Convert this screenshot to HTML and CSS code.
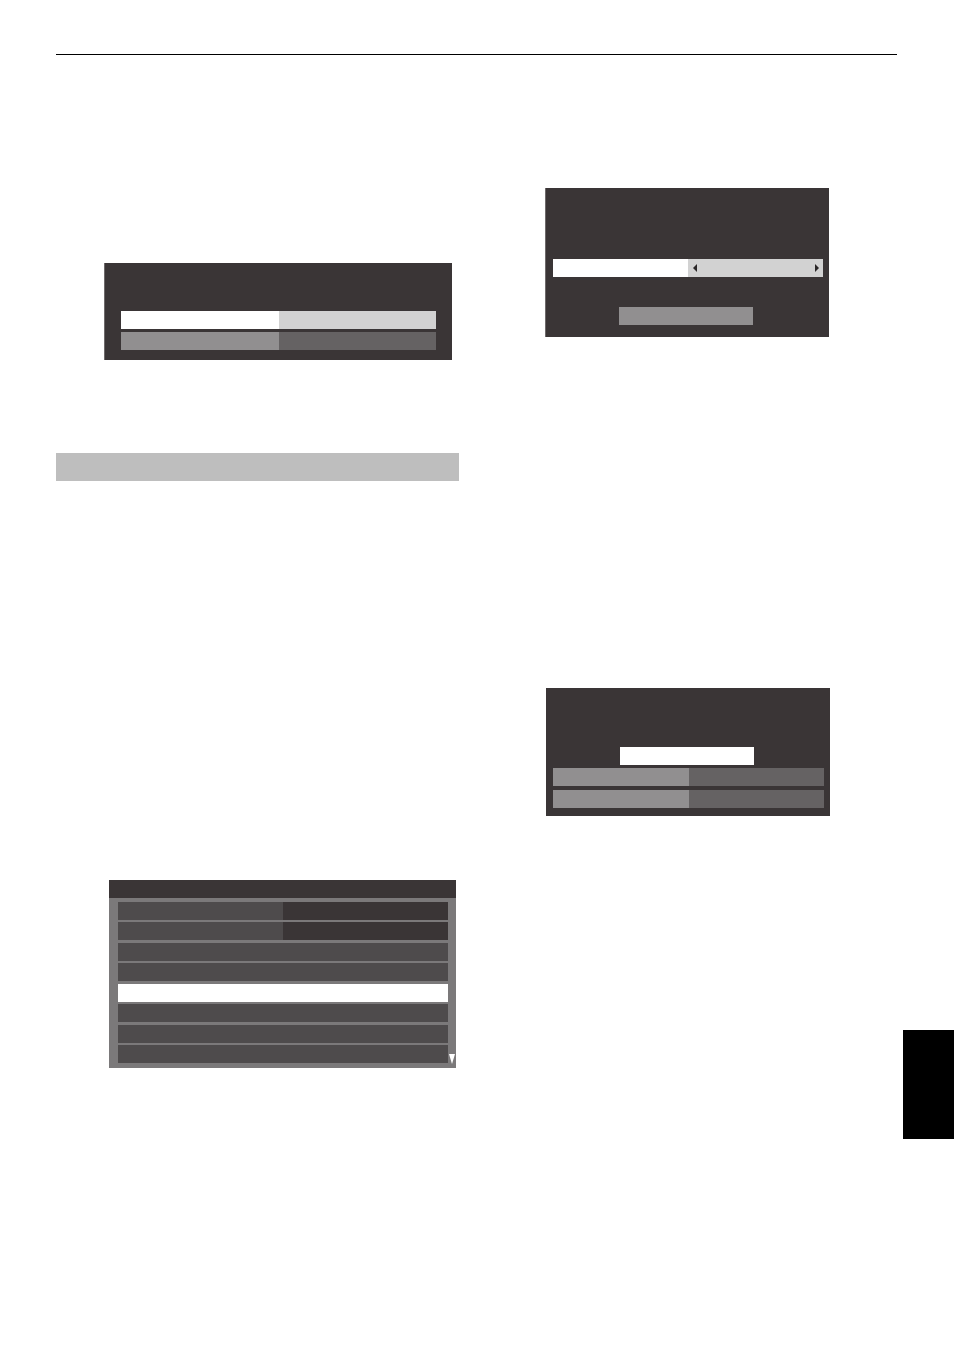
FILE: index.html
```html
<!DOCTYPE html>
<html lang="en">
<head>
  <meta charset="UTF-8">
  <meta name="viewport" content="width=device-width, initial-scale=1.0">
  <title>Manual Page</title>
  <link rel="stylesheet" href="styles.css">
</head>
<body>
  <div class="page">
    <hr class="top-rule">

    <div class="columns">
      <!-- Left column -->
      <div class="col col-left">
        <div class="osd osd-choice">
          <div class="osd-row">
            <div class="cell cell-white"></div>
            <div class="cell cell-light"></div>
          </div>
          <div class="osd-row">
            <div class="cell cell-mid"></div>
            <div class="cell cell-dark"></div>
          </div>
        </div>

        <div class="section-bar"></div>

        <div class="osd-list">
          <div class="list-header"></div>
          <div class="list-body">
            <div class="list-row split"><span></span><span></span></div>
            <div class="list-row split"><span></span><span></span></div>
            <div class="list-row"></div>
            <div class="list-row"></div>
            <div class="list-row selected"></div>
            <div class="list-row"></div>
            <div class="list-row"></div>
            <div class="list-row"></div>
            <span class="scroll-arrow"></span>
          </div>
        </div>
      </div>

      <!-- Right column -->
      <div class="col col-right">
        <div class="osd osd-setting">
          <div class="osd-row">
            <div class="cell cell-white"></div>
            <div class="cell cell-light cell-arrows">
              <span class="arrow arrow-left"></span>
              <span class="arrow arrow-right"></span>
            </div>
          </div>
          <div class="osd-button btn-grey"></div>
        </div>

        <div class="osd osd-confirm">
          <div class="osd-button btn-white"></div>
          <div class="osd-row">
            <div class="cell cell-mid"></div>
            <div class="cell cell-dark"></div>
          </div>
          <div class="osd-row">
            <div class="cell cell-mid"></div>
            <div class="cell cell-dark"></div>
          </div>
        </div>
      </div>
    </div>

    <!-- Chapter tab on page edge -->
    <div class="side-tab"></div>
  </div>
</body>
</html>
```

FILE: styles.css
```css
body {
  font-family: "Liberation Sans", Arial, sans-serif;
  margin: 0;
  padding: 0;
  background: #fff;
}

.page {
  position: relative;
  width: 954px;
  height: 1351px;
  padding-left: 56px;
  box-sizing: border-box;
  overflow: hidden;
}

.top-rule {
  margin: 54px 0 0 0;
  width: 841px;
  height: 1px;
  border: none;
  background: #000;
}

.columns {
  display: grid;
  grid-template-columns: 403px 285px;
  column-gap: 86px;
  align-items: start;
}

.col {
  display: flex;
  flex-direction: column;
  align-items: flex-start;
}

/* On-screen display boxes */
.osd {
  background: #3a3536;
  box-sizing: border-box;
  display: flex;
  flex-direction: column;
}

.osd-row {
  display: flex;
  height: 18px;
}

.cell {
  flex: 0 0 50%;
  box-sizing: border-box;
}

.cell-white { background: #fff; }
.cell-light { background: #d2d2d2; }
.cell-mid { background: #918f90; }
.cell-dark { background: #656263; }

.osd-choice {
  margin: 208px 0 0 48px;
  width: 348px;
  height: 97px;
  padding: 48px 16px 0 16px;
  gap: 3px;
  border-left: 1px solid #6e6a6b;
}

.section-bar {
  margin-top: 93px;
  width: 403px;
  height: 28px;
  background: #bebebe;
}

/* Channel list */
.osd-list {
  margin: 399px 0 0 53px;
  width: 347px;
}

.list-header {
  height: 18px;
  background: #3a3536;
}

.list-body {
  position: relative;
  background: #7b797a;
  padding: 4px 8px 5px 9px;
  display: flex;
  flex-direction: column;
  gap: 2.43px;
}

.list-row {
  height: 18px;
  background: #4e4b4c;
}

.list-row.split {
  display: flex;
}

.list-row.split span {
  flex: 1;
}

.list-row.split span + span {
  background: #3a3536;
}

.list-row.selected {
  background: #fff;
}

.scroll-arrow {
  position: absolute;
  right: 1px;
  bottom: 4px;
  width: 0;
  height: 0;
  border-left: 3px solid transparent;
  border-right: 3px solid transparent;
  border-top: 10px solid #fff;
}

/* Right column boxes */
.osd-setting {
  margin-top: 133px;
  width: 284px;
  height: 149px;
  padding: 71px 6px 0 7px;
  border-left: 1px solid #6e6a6b;
}

.cell-arrows {
  display: flex;
  align-items: center;
  justify-content: space-between;
  padding: 0 4px 0 5px;
}

.arrow {
  width: 0;
  height: 0;
  border-top: 4px solid transparent;
  border-bottom: 4px solid transparent;
}

.arrow-left { border-right: 4px solid #2a2627; }
.arrow-right { border-left: 4px solid #2a2627; }

.osd-button {
  width: 134px;
  height: 18px;
}

.btn-grey {
  margin: 30px 0 0 66px;
  background: #918f90;
}

.btn-white {
  margin-left: 67px;
  background: #fff;
}

.osd-confirm {
  margin: 351px 0 0 1px;
  width: 284px;
  height: 128px;
  padding: 59px 6px 0 7px;
}

.osd-confirm .osd-row {
  margin-top: 3px;
}

.osd-confirm .osd-row + .osd-row {
  margin-top: 4px;
}

.side-tab {
  position: absolute;
  top: 1030px;
  left: 903px;
  width: 51px;
  height: 109px;
  background: #000;
}
```
